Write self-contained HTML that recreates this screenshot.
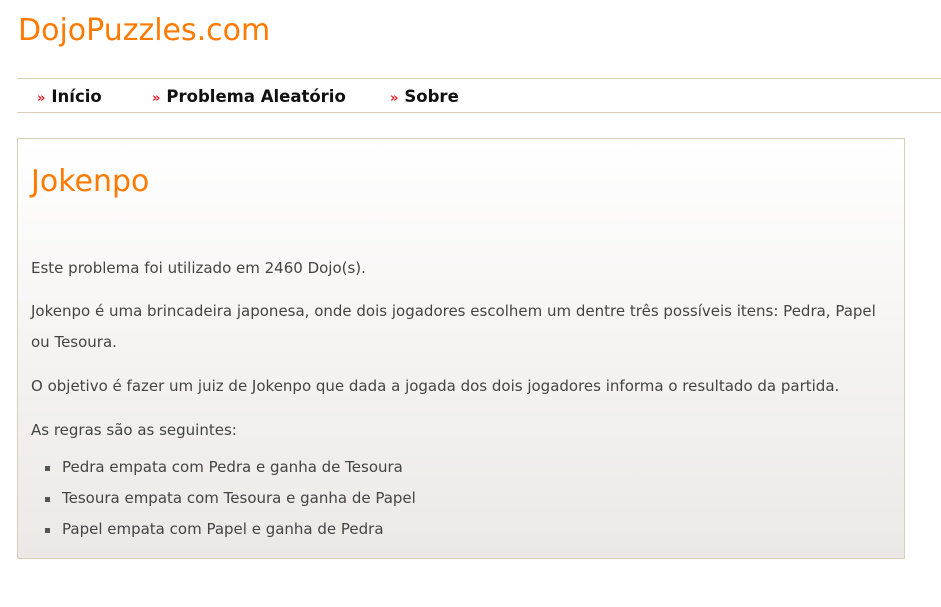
<!DOCTYPE html>
<html><head><meta charset="utf-8"><style>
body{margin:0;background:#fff;font-family:"DejaVu Sans","Liberation Sans",sans-serif;width:941px;height:607px;overflow:hidden;position:relative}
.logo{position:absolute;left:18px;top:13px;font-size:30px;color:#ff7a00}
.nav{position:absolute;left:17px;right:0;top:78px;height:33px;border-top:1px solid #d8cfb8;border-bottom:1px solid #d8cfb8}
.nav span{position:absolute;top:8px;font-weight:bold;font-size:16.5px;color:#111}
.nav b{color:#e0202a;font-size:13px;margin-right:6px}
.box{position:absolute;left:17px;top:138px;width:886px;height:419px;border:1px solid #d8cfb8;background:linear-gradient(#fff,#ece8e6)}
h1{position:absolute;left:13px;top:25px;margin:0;font-weight:normal;font-size:30px;color:#ff7a00}
.t{position:absolute;left:13px;font-size:15px;color:#444;white-space:nowrap}
.li{position:absolute;left:44px;font-size:15px;color:#444;white-space:nowrap}
.li:before{content:"";position:absolute;left:-17px;top:8px;width:5px;height:5px;background:#555}
</style></head><body>
<div class="logo">DojoPuzzles.com</div>
<div class="nav">
<span style="left:20px"><b>»</b>Início</span>
<span style="left:135px"><b>»</b>Problema Aleatório</span>
<span style="left:373px"><b>»</b>Sobre</span>
</div>
<div class="box">
<h1>Jokenpo</h1>
<div class="t" style="top:120px">Este problema foi utilizado em 2460 Dojo(s).</div>
<div class="t" style="top:163px">Jokenpo é uma brincadeira japonesa, onde dois jogadores escolhem um dentre três possíveis itens: Pedra, Papel</div>
<div class="t" style="top:194px">ou Tesoura.</div>
<div class="t" style="top:238px">O objetivo é fazer um juiz de Jokenpo que dada a jogada dos dois jogadores informa o resultado da partida.</div>
<div class="t" style="top:282px">As regras são as seguintes:</div>
<div class="li" style="top:319px">Pedra empata com Pedra e ganha de Tesoura</div>
<div class="li" style="top:350px">Tesoura empata com Tesoura e ganha de Papel</div>
<div class="li" style="top:381px">Papel empata com Papel e ganha de Pedra</div>
</div>
</body></html>
